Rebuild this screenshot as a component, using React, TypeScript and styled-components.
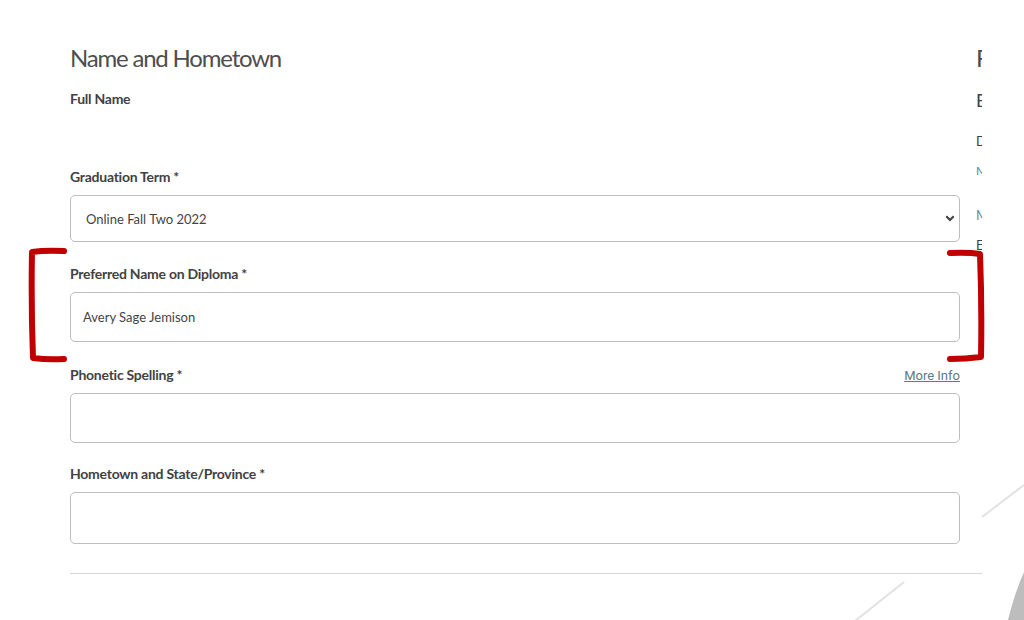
import React from "react";
import styled, { createGlobalStyle } from "styled-components";

const Global = createGlobalStyle`
  html, body { margin: 0; padding: 0; background: #ffffff; }
  body { font-family: Lato, "Open Sans", sans-serif; }
`;

const Page = styled.div`
  position: relative;
  width: 1024px;
  height: 620px;
  overflow: hidden;
  background: #ffffff;
`;

const Wrapper = styled.div`
  display: grid;
  grid-template-columns: 906px 6px;
  width: 912px;
  margin-left: 70px;
  padding-top: 42px;
  overflow: hidden;
`;

const LeftCol = styled.section`
  display: flex;
  flex-direction: column;
  min-width: 0;
`;

const RightCol = styled.aside`
  display: flex;
  flex-direction: column;
  min-width: 0;
  overflow: hidden;
`;

const Title = styled.h2`
  margin: 0;
  font-family: Lato, sans-serif;
  font-weight: 400;
  font-size: 24px;
  letter-spacing: -1.2px;
  line-height: 32px;
  color: #4e4e4e;
`;

const FieldGroup = styled.div<{ $gap?: number }>`
  width: 890px;
  display: flex;
  flex-direction: column;
  margin-top: ${(p) => p.$gap ?? 22}px;
`;

const LabelRow = styled.div`
  display: flex;
  justify-content: space-between;
  align-items: center;
  height: 20px;
  margin-bottom: 8px;
`;

const Label = styled.label`
  font-family: Lato, sans-serif;
  font-weight: 700;
  font-size: 14px;
  letter-spacing: -0.25px;
  line-height: 20px;
  color: #424242;
`;

const MoreInfo = styled.a`
  font-family: Roboto, sans-serif;
  font-size: 13px;
  color: #5b7c84;
  text-decoration: underline;
`;

const Box = styled.div<{ $h: number; $pl: number }>`
  box-sizing: border-box;
  height: ${(p) => p.$h}px;
  border: 1px solid #bdbdbd;
  border-radius: 5px;
  display: flex;
  align-items: center;
  padding: 0 4px 0 ${(p) => p.$pl}px;
  font-family: Lato, sans-serif;
  font-size: 13px;
  color: #444;
`;

const BoxText = styled.span`
  flex: 1;
`;

const Divider = styled.hr`
  width: 912px;
  margin: 29px 0 0 0;
  border: none;
  border-top: 1.5px solid #d6d6d6;
`;

const SideTitle = styled.div`
  font-family: Lato, sans-serif;
  font-size: 24px;
  line-height: 32px;
  color: #4b4b4b;
  white-space: nowrap;
`;

const SideText = styled.div<{ $size: number; $mt: number; $color: string }>`
  font-family: Lato, sans-serif;
  font-size: ${(p) => p.$size}px;
  margin-top: ${(p) => p.$mt}px;
  color: ${(p) => p.$color};
  white-space: nowrap;
`;

const Overlay = styled.svg`
  position: absolute;
  left: 0;
  top: 0;
  pointer-events: none;
`;

const Chevron = () => (
  <svg width="10" height="7" viewBox="0 0 10 7">
    <polyline points="1.3,1.3 5,5 8.7,1.3" fill="none" stroke="#444" strokeWidth="2.2" />
  </svg>
);

export default function App() {
  return (
    <Page>
      <Global />
      <Overlay width="1024" height="620" viewBox="0 0 1024 620">
        <line x1="982" y1="517" x2="1024" y2="485" stroke="#e2e2e2" strokeWidth="2" />
        <line x1="855" y1="621" x2="904" y2="582" stroke="#e2e2e2" strokeWidth="2" />
        <path d="M1008 620 Q1015 592 1024 572 L1024 620 Z" fill="#bdbdbd" />
      </Overlay>
      <Wrapper>
        <LeftCol>
          <Title>Name and Hometown</Title>
          <FieldGroup $gap={15}>
            <LabelRow>
              <Label>Full Name</Label>
            </LabelRow>
          </FieldGroup>
          <FieldGroup $gap={50}>
            <LabelRow>
              <Label>Graduation Term *</Label>
            </LabelRow>
            <Box $h={47} $pl={15}>
              <BoxText>Online Fall Two 2022</BoxText>
              <Chevron />
            </Box>
          </FieldGroup>
          <FieldGroup>
            <LabelRow>
              <Label>Preferred Name on Diploma *</Label>
            </LabelRow>
            <Box $h={50} $pl={12}>
              <BoxText>Avery Sage Jemison</BoxText>
            </Box>
          </FieldGroup>
          <FieldGroup $gap={23}>
            <LabelRow>
              <Label>Phonetic Spelling *</Label>
              <MoreInfo href="#">More Info</MoreInfo>
            </LabelRow>
            <Box $h={50} $pl={12} />
          </FieldGroup>
          <FieldGroup $gap={21}>
            <LabelRow>
              <Label>Hometown and State/Province *</Label>
            </LabelRow>
            <Box $h={52} $pl={12} />
          </FieldGroup>
          <Divider />
        </LeftCol>
        <RightCol>
          <SideTitle>Final Review</SideTitle>
          <SideText $size={18} $mt={15} $color="#3d4150">Education</SideText>
          <SideText $size={13} $mt={22} $color="#3d4150">Degree</SideText>
          <SideText $size={12} $mt={14} $color="#6d82a8">Major</SideText>
          <SideText $size={13} $mt={29} $color="#6d82a8">Minor</SideText>
          <SideText $size={13} $mt={14} $color="#3d4150">Emphasis</SideText>
        </RightCol>
      </Wrapper>
      <Overlay width="1024" height="620" viewBox="0 0 1024 620">
        <path d="M64 251 Q45 250 32 252 Q31 305 33 358 Q48 360 64 359" fill="none" stroke="#c00000" strokeWidth="6" strokeLinecap="round" strokeLinejoin="round" />
        <path d="M950 253 Q968 252 980 254 Q982 305 981 357 Q965 359 950 359" fill="none" stroke="#c00000" strokeWidth="6" strokeLinecap="round" strokeLinejoin="round" />
      </Overlay>
    </Page>
  );
}
